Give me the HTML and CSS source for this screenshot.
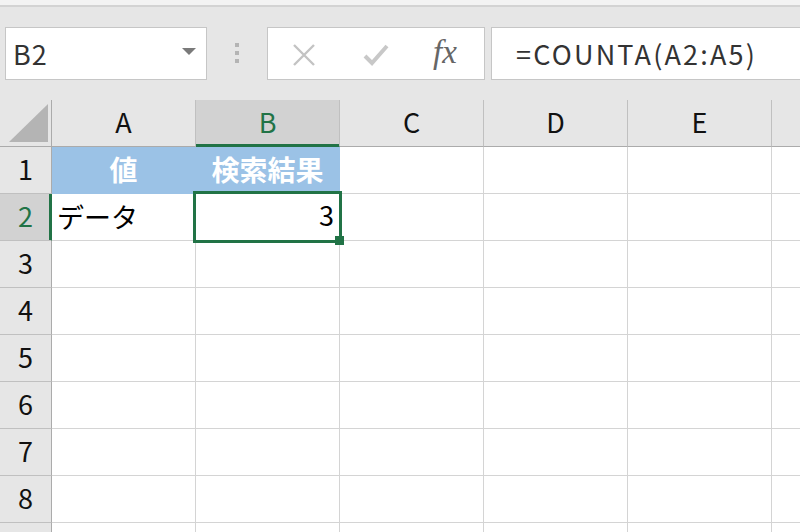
FILE: index.html
```html
<!DOCTYPE html>
<html lang="ja">
<head>
<meta charset="utf-8">
<title>Excel</title>
<link rel="stylesheet" href="styles.css">
</head>
<body>
<div class="app">
  <div class="topstrip"></div>
  <div class="toolbar">
    <div class="namebox">
      <span class="nametext">B2</span>
      <svg class="caret" width="14" height="8" viewBox="0 0 14 8"><polygon points="0,0 14,0 7,7" fill="#7a7a7a"/></svg>
    </div>
    <div class="dots"><i></i><i></i><i></i></div>
    <div class="btnbox">
      <svg class="ico-x" width="24" height="22" viewBox="0 0 24 22"><path d="M2 1 L22 21 M22 1 L2 21" stroke="#c3c3c3" stroke-width="2.4" fill="none"/></svg>
      <svg class="ico-check" width="26" height="22" viewBox="0 0 26 22"><path d="M2 12 L9 19 L24 2" stroke="#c8c8c8" stroke-width="4" fill="none"/></svg>
      <span class="fx">fx</span>
    </div>
    <div class="formula">=COUNTA(A2:A5)</div>
  </div>
  <div class="sheet">
    <div class="corner"><svg width="51" height="46" viewBox="0 0 51 46"><polygon points="9,42 48,42 48,4" fill="#b4b4b4"/></svg></div>
    <div class="ch">A</div>
    <div class="ch sel">B</div>
    <div class="ch">C</div>
    <div class="ch">D</div>
    <div class="ch">E</div>
    <div class="ch"></div>

    <div class="rh">1</div>
    <div class="c hdr">値</div>
    <div class="c hdr">検索結果</div>
    <div class="c"></div><div class="c"></div><div class="c"></div><div class="c"></div>

    <div class="rh sel">2</div>
    <div class="c txt">データ</div>
    <div class="c num">3</div>
    <div class="c"></div><div class="c"></div><div class="c"></div><div class="c"></div>

    <div class="rh">3</div>
    <div class="c"></div><div class="c"></div><div class="c"></div><div class="c"></div><div class="c"></div><div class="c"></div>
    <div class="rh">4</div>
    <div class="c"></div><div class="c"></div><div class="c"></div><div class="c"></div><div class="c"></div><div class="c"></div>
    <div class="rh">5</div>
    <div class="c"></div><div class="c"></div><div class="c"></div><div class="c"></div><div class="c"></div><div class="c"></div>
    <div class="rh">6</div>
    <div class="c"></div><div class="c"></div><div class="c"></div><div class="c"></div><div class="c"></div><div class="c"></div>
    <div class="rh">7</div>
    <div class="c"></div><div class="c"></div><div class="c"></div><div class="c"></div><div class="c"></div><div class="c"></div>
    <div class="rh">8</div>
    <div class="c"></div><div class="c"></div><div class="c"></div><div class="c"></div><div class="c"></div><div class="c"></div>
    <div class="rh"></div>
    <div class="c"></div><div class="c"></div><div class="c"></div><div class="c"></div><div class="c"></div><div class="c"></div>

    <div class="selection"></div>
    <div class="handle"></div>
  </div>
</div>
</body>
</html>
```
FILE: styles.css
```css
html, body {
  margin: 0;
  padding: 0;
}
body {
  width: 800px;
  height: 532px;
  overflow: hidden;
  background: #e6e6e6;
  font-family: "Noto Sans CJK JP", "Noto Sans", sans-serif;
  color: #1a1a1a;
}
.app {
  width: 800px;
  height: 532px;
  overflow: hidden;
  background: #e6e6e6;
}
.topstrip {
  height: 5px;
  background: #f3f3f3;
  border-bottom: 2px solid #d3d3d3;
}
.toolbar {
  height: 93px;
  box-sizing: border-box;
  padding: 20px 0 0 5px;
  display: flex;
  align-items: flex-start;
  white-space: nowrap;
}
.toolbar > * {
  flex-shrink: 0;
}
.namebox {
  box-sizing: border-box;
  width: 202px;
  height: 53px;
  background: #fff;
  border: 1px solid #c6c6c6;
  display: flex;
  align-items: center;
  padding-left: 7px;
  padding-right: 10px;
}
.nametext {
  flex: 1;
  font-size: 27px;
  letter-spacing: 1px;
  color: #333;
  line-height: 1;
}
.caret {
  display: block;
  margin-top: -3px;
}
.dots {
  margin-left: 28px;
  margin-top: 16px;
  width: 4px;
  display: flex;
  flex-direction: column;
  gap: 4px;
}
.dots i {
  display: block;
  width: 4px;
  height: 4px;
  background: #b4b4b4;
}
.btnbox {
  box-sizing: border-box;
  margin-left: 28px;
  width: 218px;
  height: 53px;
  background: #fff;
  border: 1px solid #c6c6c6;
  display: flex;
  align-items: center;
}
.ico-x {
  display: block;
  margin-left: 24px;
  margin-top: 2px;
}
.ico-check {
  display: block;
  margin-left: 47px;
  margin-top: 2px;
}
.fx {
  margin-left: 44px;
  font-family: "Liberation Serif", "DejaVu Serif", serif;
  font-style: italic;
  font-size: 33px;
  color: #666;
  line-height: 1;
  margin-top: -2px;
}
.formula {
  box-sizing: border-box;
  margin-left: 6px;
  width: 330px;
  height: 53px;
  background: #fff;
  border: 1px solid #c6c6c6;
  border-right: none;
  padding-left: 24px;
  display: flex;
  align-items: center;
  font-size: 27px;
  letter-spacing: 2.2px;
  color: #333;
  line-height: 1;
}
.sheet {
  position: relative;
  display: grid;
  grid-template-columns: 52px repeat(6, 144px);
  grid-template-rows: repeat(10, 47px);
  width: 916px;
}
.sheet > div {
  box-sizing: border-box;
}
.corner {
  background: #e6e6e6;
  border-right: 1px solid #ababab;
  border-bottom: 1px solid #ababab;
}
.corner svg {
  display: block;
}
.ch {
  background: #e6e6e6;
  border-right: 1px solid #c0c0c0;
  border-bottom: 1px solid #ababab;
  display: flex;
  align-items: center;
  justify-content: center;
  font-size: 27px;
  color: #111;
  padding-bottom: 3px;
}
.ch.sel {
  background: #d2d2d2;
  color: #217346;
  border-bottom-color: #217346;
  box-shadow: inset 0 -2px 0 #217346;
}
.rh {
  background: #e6e6e6;
  border-right: 1px solid #ababab;
  border-bottom: 1px solid #c0c0c0;
  display: flex;
  align-items: center;
  justify-content: center;
  font-size: 27px;
  color: #111;
  padding-bottom: 3px;
}
.rh.sel {
  background: #d2d2d2;
  color: #217346;
  border-right-color: #217346;
  box-shadow: inset -2px 0 0 #217346;
}
.c {
  background: #fff;
  border-right: 1px solid #d4d4d4;
  border-bottom: 1px solid #d4d4d4;
  display: flex;
  align-items: center;
  font-size: 27px;
  color: #000;
  padding-bottom: 2px;
}
.c.hdr {
  background: #9bc2e6;
  border-color: #9bc2e6;
  color: #fff;
  font-weight: bold;
  justify-content: center;
  font-size: 28px;
  padding-bottom: 3px;
}
.c.txt {
  padding-left: 5px;
}
.c.num {
  justify-content: flex-end;
  padding-right: 5px;
  padding-bottom: 5px;
}
.selection {
  position: absolute;
  left: 193px;
  top: 91px;
  width: 149px;
  height: 52px;
  border: 3px solid #217346;
  pointer-events: none;
}
.handle {
  position: absolute;
  left: 335px;
  top: 136px;
  width: 9px;
  height: 9px;
  background: #217346;
}
```
